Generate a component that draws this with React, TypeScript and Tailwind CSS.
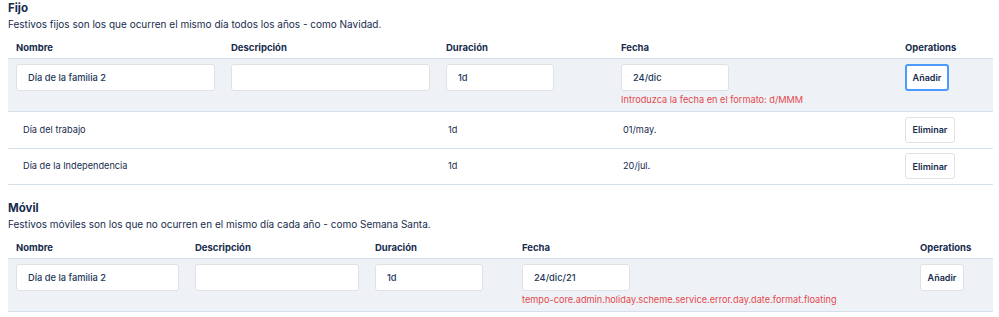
import { useState } from "react";

type Holiday = { name: string; duration: string; date: string };

type Section = {
  title: string;
  description: string;
  cols: string[];
  draft: { name: string; description: string; duration: string; date: string };
  error: string;
  focused: boolean;
  rows: Holiday[];
};

const sections: Section[] = [
  {
    title: "Fijo",
    description: "Festivos fijos son los que ocurren el mismo día todos los años - como Navidad.",
    cols: ["w-[215px]", "w-[215px]", "w-[175px]", "w-[284px]", ""],
    draft: { name: "Día de la familia 2", description: "", duration: "1d", date: "24/dic" },
    error: "Introduzca la fecha en el formato: d/MMM",
    focused: true,
    rows: [
      { name: "Día del trabajo", duration: "1d", date: "01/may." },
      { name: "Día de la Independencia", duration: "1d", date: "20/jul." },
    ],
  },
  {
    title: "Móvil",
    description: "Festivos móviles son los que no ocurren en el mismo día cada año - como Semana Santa.",
    cols: ["w-[179px]", "w-[180px]", "w-[147px]", "w-[398px]", ""],
    draft: { name: "Día de la familia 2", description: "", duration: "1d", date: "24/dic/21" },
    error: "tempo-core.admin.holiday.scheme.service.error.day.date.format.floating",
    focused: false,
    rows: [{ name: "Pascua", duration: "1d", date: "04/abr./21" }],
  },
];

const headers = ["Nombre", "Descripción", "Duración", "Fecha", "Operations"];

function TextInput({ value, className }: { value: string; className: string }) {
  const [v, setV] = useState(value);
  return (
    <input
      value={v}
      onChange={(e) => setV(e.target.value)}
      className={`h-[27px] rounded-[3px] border border-[#dfe1e6] bg-white pl-[11px] text-[9.3px] font-medium text-[#253858] outline-none ${className}`}
    />
  );
}

function HolidayTable({ section }: { section: Section }) {
  return (
    <div className="mb-[15px]">
      <h2 className="text-[11.5px] font-bold leading-4 text-[#172b4d]">{section.title}</h2>
      <p className="text-[10px] leading-4 text-[#172b4d]">{section.description}</p>
      <table className="mt-[6px] w-[985px] table-fixed border-collapse">
        <thead>
          <tr className="border-b border-[#d5e0ea]">
            {headers.map((h, i) => (
              <th
                key={h}
                className={`${section.cols[i]} px-2 pt-[4px] pb-[4px] text-left text-[9.5px] font-bold leading-[12px] text-[#172b4d]`}
              >
                {h}
              </th>
            ))}
          </tr>
        </thead>
        <tbody>
          <tr className="border-b border-[#d5e0ea] bg-[#eef2f7] align-top">
            <td className="px-2 pt-[4px] pb-[3px]">
              <TextInput value={section.draft.name} className="w-full" />
            </td>
            <td className="px-2 pt-[4px] pb-[3px]">
              <TextInput value={section.draft.description} className="w-full" />
            </td>
            <td className="px-2 pt-[4px] pb-[3px]">
              <TextInput value={section.draft.duration} className="w-[108px]" />
            </td>
            <td className="px-2 pt-[4px] pb-[3px]">
              <TextInput value={section.draft.date} className="w-[108px]" />
              <div className="whitespace-nowrap pt-[1px] text-[9.2px] leading-[16px] text-[#e5484d]">
                {section.error}
              </div>
            </td>
            <td className="px-2 pt-[4px] pb-[3px]">
              <button
                className={`h-[27px] w-[44px] rounded-[3px] bg-white text-[9px] font-semibold text-[#172b4d] ${
                  section.focused ? "border-2 border-[#4c9aff]" : "border border-[#dfe1e6]"
                }`}
              >
                Añadir
              </button>
            </td>
          </tr>
          {section.rows.map((r) => (
            <tr key={r.name} className="border-b border-[#d5e0ea] align-middle text-[9.2px] text-[#172b4d]">
              <td className="h-[36.5px] pr-2 pl-[15px]">{r.name}</td>
              <td className="px-2"></td>
              <td className="pr-2 pl-[10px]">{r.duration}</td>
              <td className="pr-2 pl-[10px]">{r.date}</td>
              <td className="px-2">
                <button className="h-[26px] w-[50px] rounded-[3px] border border-[#dfe1e6] bg-white text-[9px] font-semibold text-[#172b4d]">
                  Eliminar
                </button>
              </td>
            </tr>
          ))}
        </tbody>
      </table>
    </div>
  );
}

export default function App() {
  return (
    <div className="min-h-screen bg-white px-2 font-['Inter',sans-serif]">
      {sections.map((s) => (
        <HolidayTable key={s.title} section={s} />
      ))}
    </div>
  );
}
